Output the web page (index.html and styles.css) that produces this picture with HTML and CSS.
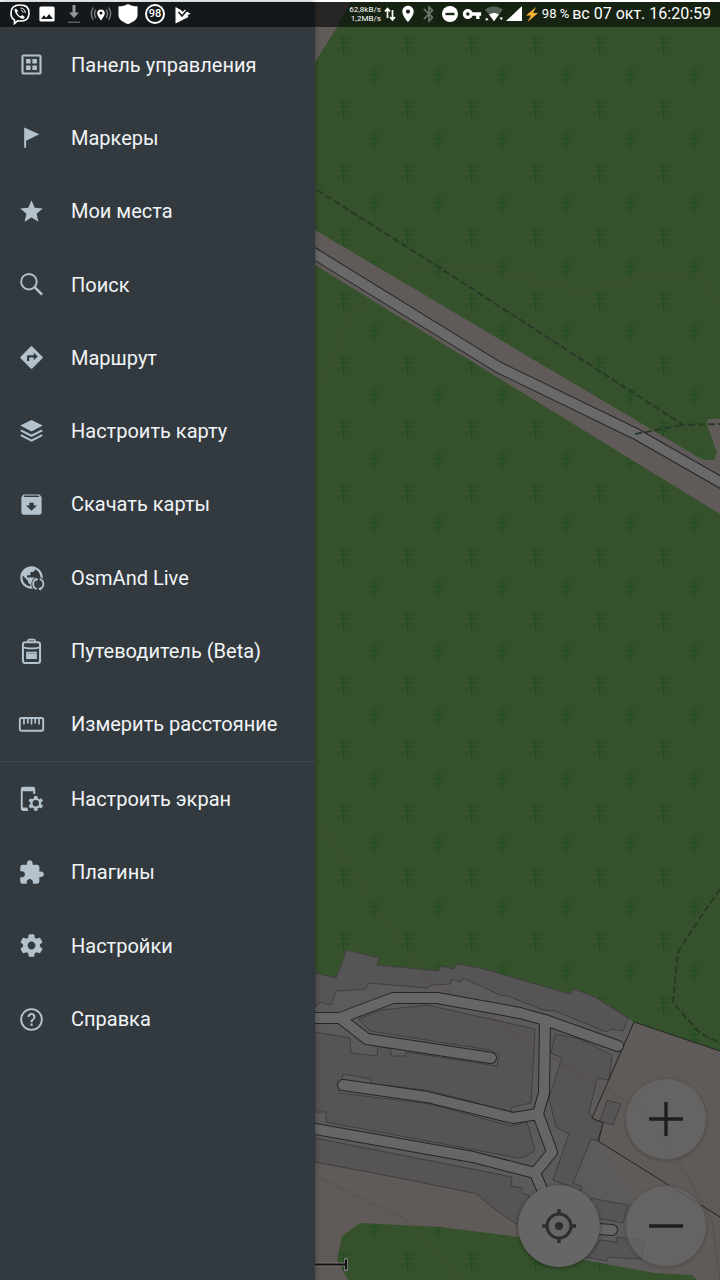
FILE: index.html
```html
<!DOCTYPE html>
<html lang="ru">
<head>
<meta charset="utf-8">
<meta name="viewport" content="width=device-width, initial-scale=1">
<title>OsmAnd</title>
<link rel="stylesheet" href="styles.css">
</head>
<body>
<div class="screen">
  <header class="status">
    <div class="status-left">
      <svg class="s-icon" viewBox="0 0 22 22"><path d="M11 2C4.500 2 2 4.500 2 10c0 3.500 1 5.800 3.500 7v3.500l3-2.700c8 .9 11.500-1.600 11.500-7.800C20 4.500 17.500 2 11 2z" fill="none" stroke="#fff" stroke-width="1.600"/><path d="M7 5.500l2 2.500-1 1.500c.8 2 1.800 3 3.700 3.800l1.500-1.200 2.500 1.900c-.3 1.600-1.400 2.200-2.700 1.700C9 14 6.500 11 5.500 7.500c0-1 .6-1.700 1.500-2z" fill="#fff"/><path d="M11.500 5c3 .2 4.700 2 4.800 5M12 7.300c1.300.2 2 1 2.100 2.300" fill="none" stroke="#fff" stroke-width="1"/></svg>
      <svg class="s-icon" viewBox="1 1 26 26"><path fill="#fff" d="M23 21V7c0-1.100-.9-2-2-2H7c-1.100 0-2 .9-2 2v14c0 1.100.9 2 2 2h14c1.100 0 2-.9 2-2zM10.500 15.500l2.500 3 3.500-4.500 4.500 6H7z"/></svg>
      <svg class="s-icon" viewBox="0 0 22 22"><path d="M9.500 2h3v7.500H16l-5 5.500-5-5.500h3.500z" fill="#96999a"/><path d="M5 18.500h12V20H5z" fill="#5a5e60"/></svg>
      <svg class="s-icon" viewBox="0 0 22 22"><path d="M11 6.500c-2.300 0-3.800 1.600-3.800 3.600C7.200 13 11 17.500 11 17.500s3.800-4.500 3.800-7.400c0-2-1.500-3.600-3.800-3.600zm0 5a1.500 1.500 0 1 1 0-3 1.500 1.500 0 0 1 0 3z" fill="#fff"/><g fill="none" stroke="#7c8183" stroke-width="1.400"><path d="M5.800 6.500c-1.500 2.500-1.500 6 0 8.500M16.200 6.500c1.500 2.500 1.500 6 0 8.500M3.300 4.500c-2.300 3.700-2.300 8.800 0 12.500M18.700 4.500c2.300 3.700 2.300 8.800 0 12.500"/></g></svg>
      <svg class="s-icon" viewBox="0 0 22 22"><path d="M11 1c2.500 1.500 5.500 2.300 9.500 2.300v9c0 5-5.500 7-9.500 9-4-2-9.500-4-9.500-9v-9C5.500 3.300 8.500 2.500 11 1z" fill="#fff"/></svg>
      <span class="badge">98</span>
      <svg class="s-icon" viewBox="0 0 22 22"><path d="M4.500 4L10 7l1.500 2L14 6.500l2 2.200 3.500 1.800-3 2 1 1.500-13 6.500z" fill="#fff"/><path d="M7.500 9l3.500 4 6.500-7.500" fill="none" stroke="#161a1c" stroke-width="1.600"/></svg>
    </div>
    <div class="status-right">
      <div class="speed"><span>62,8kB/s</span><span>1,2MB/s</span></div>
      <svg class="arrows" viewBox="0 0 12 18"><path d="M3.500 13V4M1 6.500L3.500 3.500 6 6.500M8.500 5v9M6 12l2.500 3 2.500-3" fill="none" stroke="#fff" stroke-width="1.700"/></svg>
      <svg class="r-icon" viewBox="3 1 18 22"><path fill="#fff" d="M12 2C8.130 2 5 5.130 5 9c0 5.250 7 13 7 13s7-7.750 7-13c0-3.870-3.130-7-7-7zm0 9.500c-1.380 0-2.500-1.120-2.500-2.500s1.120-2.500 2.500-2.500 2.500 1.120 2.500 2.500-1.120 2.500-2.500 2.500z"/></svg>
      <svg class="r-icon" viewBox="1 1 22 22"><path fill="#6d766d" d="M17.710 7.710L12 2h-1v7.590L6.410 5 5 6.410 10.590 12 5 17.590 6.410 19 11 14.410V22h1l5.710-5.710-4.300-4.290zM13 5.830l1.880 1.880L13 9.590zm1.880 10.460L13 18.170v-3.760z"/></svg>
      <svg class="r-icon" viewBox="0 0 18 18"><circle cx="9" cy="9" r="8" fill="#fff"/><path d="M4.500 7.800h9v2.400h-9z" fill="#1b2919"/></svg>
      <svg class="key" viewBox="0 4 24 16"><path fill="#fff" d="M12.650 10C11.830 7.670 9.610 6 7 6c-3.310 0-6 2.690-6 6s2.690 6 6 6c2.610 0 4.830-1.670 5.650-4H17v4h4v-4h2v-4zM7 14c-1.100 0-2-.9-2-2s.9-2 2-2 2 .9 2 2-.9 2-2 2z"/></svg>
      <svg class="r-icon" viewBox="0 0 20 18"><path d="M0 4c6-4.500 14-4.500 20 0L10 17z" fill="#566155"/><path d="M4.500 9.500c3.500-2.300 7.500-2.300 11 0L10 17z" fill="#fff"/><path d="M0 16l2-3 2 3zM16 13h4l-2 3z" fill="#fff"/></svg>
      <svg class="signal" viewBox="0 0 16 16"><path d="M16 0v15H0z" fill="#fff"/></svg>
      <svg class="bolt" viewBox="0 0 14 18"><path d="M11 2L1 10.500h5L2.500 17 13 8H8z" fill="#f6b431"/></svg>
      <span class="battery">98 %</span>
      <span class="clock">вс 07 окт. 16:20:59</span>
    </div>
  </header>

  <nav class="drawer">
    <ul class="menu menu-main">
      <li><a href="#dashboard"><svg class="icon" viewBox="0 0 24 24"><rect x="4" y="4" width="16" height="16" rx="1" fill="none" stroke="currentColor" stroke-width="1.900"/><path d="M7.200 7.200h4v4h-4zM12.800 7.200h4v4h-4zM7.200 12.800h4v4h-4zM12.800 12.800h4v4h-4z"/></svg>Панель управления</a></li>
      <li><a href="#markers"><svg class="icon" viewBox="0 0 24 24"><path d="M5.500 3L19 9 7.200 14.800V21H5.500z"/></svg>Маркеры</a></li>
      <li><a href="#places"><svg class="icon" viewBox="0 0 24 24"><path d="M12 17.270L18.180 21l-1.640-7.030L22 9.240l-7.190-.61L12 2 9.190 8.630 2 9.240l5.460 4.730L5.820 21z"/></svg>Мои места</a></li>
      <li><a href="#search"><svg class="icon" viewBox="0 0 24 24"><path d="M14.500 14.200l6.900 6.900" stroke="currentColor" stroke-width="2.200"/><circle cx="9.700" cy="9.500" r="6.900" fill="none" stroke="currentColor" stroke-width="1.700"/></svg>Поиск</a></li>
      <li><a href="#route"><svg class="icon" viewBox="0 0 24 24"><path d="M21.710 11.290l-9-9c-.39-.39-1.020-.39-1.410 0l-9 9c-.39.39-.39 1.020 0 1.410l9 9c.39.39 1.020.39 1.410 0l9-9c.39-.38.39-1.010 0-1.410zM14 14.500V12h-4v3H8v-4c0-.55.45-1 1-1h5V7.500l3.500 3.500z"/></svg>Маршрут</a></li>
      <li><a href="#map"><svg class="icon" viewBox="0 0 24 24"><path d="M12 1.800L22 6.700 12 12 2 6.700z"/><path d="M2.500 11l9.500 4.800 9.500-4.800M2.500 15.300l9.500 4.800 9.500-4.800" fill="none" stroke="currentColor" stroke-width="1.800"/></svg>Настроить карту</a></li>
      <li><a href="#download"><svg class="icon" viewBox="0 0 24 24"><path fill-rule="evenodd" d="M20.500 4.800L19.200 3H4.800L3.500 4.800C3.200 5.200 3 5.600 3 6v13c0 1.100.9 2 2 2h14c1.100 0 2-.9 2-2V6c0-.4-.2-.8-.5-1.200zM12 17.500l-5-4.700h3V10.500h4v2.300h3zM5 5.300L5.800 4h12.400l.8 1.300z"/></svg>Скачать карты</a></li>
      <li><a href="#live"><svg class="icon" viewBox="0 0 24 24"><path d="M12 2C6.480 2 2 6.480 2 12s4.480 10 10 10 10-4.480 10-10S17.520 2 12 2zm-1 17.930c-3.950-.49-7-3.850-7-7.930 0-.62.08-1.210.21-1.790L9 15v1c0 1.100.9 2 2 2zm6.900-2.540c-.26-.81-1-1.390-1.900-1.390h-1v-3c0-.55-.45-1-1-1H8v-2h2c.55 0 1-.45 1-1V7h2c1.100 0 2-.9 2-2v-.41c2.930 1.190 5 4.060 5 7.410 0 2.080-.8 3.970-2.100 5.390z"/><circle cx="18" cy="17.800" r="6.200" fill="#333a3f"/><path d="M16.700 22.200c-4.300-1-4.300-7.700 0-8.700M19.300 13.500c4.300 1 4.300 7.700 0 8.700" fill="none" stroke="currentColor" stroke-width="1.600"/><path d="M15.700 11.800l2.300 1.900-2.300 1.900zM20.300 20.200v3.800L18 22.100z"/></svg>OsmAnd Live</a></li>
      <li><a href="#guide"><svg class="icon" viewBox="0 0 24 24"><path d="M9 3.500V2.300C9 1 15 1 15 2.300v1.200" fill="none" stroke="currentColor" stroke-width="1.600"/><rect x="4.400" y="3.800" width="15.200" height="18.500" rx="2" fill="none" stroke="currentColor" stroke-width="1.800"/><path d="M5 8.200c2 1.400 12 1.400 14 0M8 13h8v5H8z" stroke="currentColor" stroke-width="1.500" fill="none"/><path d="M8 14h8v4.500H8z"/></svg>Путеводитель (Beta)</a></li>
      <li><a href="#measure"><svg class="icon" viewBox="0 0 24 24"><rect x="1.600" y="6.200" width="20.800" height="11.400" rx="1.500" fill="none" stroke="currentColor" stroke-width="1.700"/><path d="M5.300 7v5M8.700 7v4M12 7v5M15.300 7v4M18.700 7v5" stroke="currentColor" stroke-width="1.500"/></svg>Измерить расстояние</a></li>
    </ul>
    <ul class="menu menu-extra">
      <li><a href="#screen"><svg class="icon" viewBox="0 0 24 24"><path d="M4.500 1.500h8.800c1.100 0 2 .9 2 2V8h-1.800V5.500H4.200V20h4l1 3H4.500c-1.100 0-2-.9-2-2V3.500c0-1.100.9-2 2-2z"/><circle cx="15.800" cy="16.300" r="3.900" fill="none" stroke="currentColor" stroke-width="2"/><path d="M15.800 9.800V12M15.800 20.600v2.200M10.100 13l1.900 1.100M19.600 18.500l1.900 1.100M10.100 19.600l1.900-1.100M19.600 14.100l1.900-1.100" stroke="currentColor" stroke-width="3"/></svg>Настроить экран</a></li>
      <li><a href="#plugins"><svg class="icon" viewBox="0 0 24 24"><path d="M20.500 11H19V7c0-1.100-.9-2-2-2h-4V3.500C13 2.120 11.880 1 10.500 1S8 2.120 8 3.500V5H4c-1.100 0-1.990.9-1.990 2v3.800H3.500c1.490 0 2.700 1.210 2.700 2.700s-1.210 2.700-2.700 2.700H2V20c0 1.100.9 2 2 2h3.800v-1.500c0-1.490 1.210-2.700 2.700-2.700s2.700 1.210 2.700 2.700V22H17c1.100 0 2-.9 2-2v-4h1.500c1.380 0 2.500-1.120 2.500-2.500S21.880 11 20.500 11z"/></svg>Плагины</a></li>
      <li><a href="#settings"><svg class="icon" viewBox="0 0 24 24"><path d="M19.430 12.980c.04-.32.07-.64.07-.98s-.03-.66-.07-.98l2.110-1.650c.19-.15.24-.42.12-.64l-2-3.460c-.12-.22-.39-.3-.61-.22l-2.490 1c-.52-.4-1.080-.73-1.690-.98l-.38-2.650C14.460 2.180 14.250 2 14 2h-4c-.25 0-.46.18-.49.42l-.38 2.650c-.61.25-1.170.59-1.690.98l-2.490-1c-.23-.09-.49 0-.61.22l-2 3.460c-.13.22-.07.49.12.64l2.110 1.650c-.04.32-.07.65-.07.98s.03.66.07.98l-2.110 1.650c-.19.15-.24.42-.12.64l2 3.460c.12.22.39.3.61.22l2.490-1c.52.4 1.080.73 1.690.98l.38 2.650c.03.24.24.42.49.42h4c.25 0 .46-.18.49-.42l.38-2.650c.61-.25 1.170-.59 1.690-.98l2.490 1c.23.09.49 0 .61-.22l2-3.460c.12-.22.07-.49-.12-.64zM12 15.500c-1.930 0-3.500-1.570-3.500-3.500s1.570-3.500 3.500-3.500 3.500 1.570 3.500 3.500-1.570 3.500-3.500 3.500z"/></svg>Настройки</a></li>
      <li><a href="#help"><svg class="icon" viewBox="0 0 24 24"><circle cx="12" cy="12" r="9.200" fill="none" stroke="currentColor" stroke-width="1.700"/><path d="M11.100 17.500h1.900v-1.900h-1.900zM12 6.200c-2 0-3.500 1.500-3.500 3.500h1.800c0-1 .7-1.800 1.700-1.800s1.700.8 1.700 1.800c0 1.700-2.600 1.800-2.600 4.700H13c0-2.300 2.500-2.500 2.500-4.700 0-2-1.500-3.500-3.500-3.500z"/></svg>Справка</a></li>
    </ul>
  </nav>

  <main class="map">
    <svg class="map-canvas" viewBox="315 0 405 1280" preserveAspectRatio="xMinYMin slice">
      <defs>
        <pattern id="trees" x="327" y="29" width="64" height="64" patternUnits="userSpaceOnUse">
          <g fill="none" stroke="#234d21" stroke-width="1.200">
            <path d="M16.500 8v16h4M11 11l5.500-3 5 3M11 15l5.500-2 5 2M11 20l5.500-3 5 3"/>
            <path d="M47.500 40v17M42 43l5.500-3 5 3M42 47l5.500-2 5 2M42 52l5.500-3 5 3"/>
          </g>
        </pattern>
      </defs>
      <path class="forest" d="M315 0H720V1280H315z"/>
      <path fill="url(#trees)" d="M315 0H720V1280H315z"/>
      <path class="ground" d="M315 0H352L337 27 315 62zM315 230L703 460H714L717 453 707 424 708 419H720V514L315 265z"/>
      <path class="ground" d="M634 1022L720 1051V1280H697L692 1275 655 1273 585 1260 520 1237 440 1227 360 1223 342 1236 337 1260 348 1280H315V1140L570 1130z"/>
      <path class="homes" d="M315 973L336 978 347 950 379 958 377 965 438 971 441 966 454 969 456 964 480 968 570 994 574 989 595 997 634 1022 592 1118 603 1123 598 1141 608 1153 635 1200 655 1240V1273L585 1260 520 1237 518 1225 497 1211 477 1194 410 1180 315 1162z"/>
      <g class="parcel">
        <path d="M315 973L336 978 347 950 379 958 377 965 438 971 441 966 454 969 456 964 480 968 570 994 574 989 595 997 628 1018 623 1031 612 1029 606 1032 555 1011 543 1010 508 996 500 995 463 978 460 982 452 979 450 984 431 985 427 988 368 983 366 989 336 991 331 1005 319 1002 315 1008z"/>
        <path d="M315 1032L350 1038 351 1053 377 1056 378 1046 391 1049V1056H405L406 1052 497 1066 499 1055 490 1050 370 1031 358 1019 382 1010 427 1005 535 1029 531 1103 512 1107 511 1112 427 1090 371 1084V1079L343 1074 339 1093 430 1104 511 1126 527 1122 535 1150 525 1157 518 1158 326 1122V1112H315z"/>
        <path d="M315 1138L512 1177 511 1186 522 1188V1193L528 1195 540 1225H518L497 1211 477 1194 410 1180 315 1162z"/>
        <path d="M555 1034L580 1039 612 1055 609 1080 597 1078 589 1113 592 1118 603 1123 599 1141 591 1139 573 1183 582 1186 581 1191 553 1180 569 1134 556 1127 549 1098 562 1058 551 1053z"/>
        <path d="M590 1198L628 1205 623 1223 597 1218zM600 1240L617 1242V1237L644 1241 642 1259 608 1257 607 1261 585 1257zM607 1100L621 1104 613 1125 600 1121z"/>
      </g>
      <path class="fence" d="M720 1051L634 1022 592 1118 603 1123 598 1141 720 1217"/>
      <path class="contour" d="M317 393L335 353 347 317 365 303M400 278L410 272 470 264 523 278 587 293 643 275 700 276 715 300"/>
      <path class="contour" d="M315 818L393 930 424 977 500 1023 560 1063 647 1113 690 1180 712 1220 720 1280M315 1175L410 1222 460 1280"/>
      <g class="road-edge">
        <path d="M305 248L315 254 498 367 636 434 720 482 730 488"/>
        <path d="M305 1018H340L393 998H437L520 1013 545 1020 618 1046M340 1018L367 1039 491 1058M343 1085L427 1097 513 1118 538 1114M545 1020L544 1093 538 1114 552 1152 535 1173 558 1226 612 1230M305 1128L315 1129 473 1157 535 1173"/>
      </g>
      <g class="road">
        <path class="highway" d="M305 248L315 254 498 367 636 434 720 482 730 488"/>
        <path d="M305 1018H340L393 998H437L520 1013 545 1020 618 1046M340 1018L367 1039 491 1058M343 1085L427 1097 513 1118 538 1114M545 1020L544 1093 538 1114 552 1152 535 1173 558 1226 612 1230M305 1128L315 1129 473 1157 535 1173"/>
      </g>
      <path class="trail" d="M317 190L440 268 683 425 720 424M635 434L683 425M720 889L692 930 678 952 673 1003 700 1033 718 1042"/>
      <path class="scale-halo" d="M315 1264.500H346M346 1258V1271"/>
      <path class="scale" d="M315 1264.500H346M346 1259.500V1269.500"/>
    </svg>
    <div class="controls">
      <button class="round zoom-in" type="button" aria-label="Приблизить"><svg viewBox="0 0 40 40"><path d="M3 20H37M20 3V37" stroke="#1e1e1e" stroke-width="3.400"/></svg></button>
      <button class="round locate" type="button" aria-label="Моё местоположение"><svg viewBox="0 0 40 40"><g fill="none" stroke="#2e2e2e"><circle cx="20" cy="20" r="12" stroke-width="3"/><path d="M20 3V8.500M20 31.500V37M3 20H8.500M31.500 20H37" stroke-width="3.400"/></g><circle cx="20" cy="20" r="4" fill="#2e2e2e"/></svg></button>
      <button class="round zoom-out" type="button" aria-label="Отдалить"><svg viewBox="0 0 40 40"><path d="M3 20H37" stroke="#1e1e1e" stroke-width="3.400"/></svg></button>
    </div>
  </main>
</div>
</body>
</html>
```
FILE: styles.css
```css
* {
  box-sizing: border-box;
}

body {
  margin: 0;
  font-family: Roboto, "Noto Sans", sans-serif;
  color: #f1f4f6;
  background: #333a3f;
}

.screen {
  position: relative;
  display: grid;
  grid-template-columns: 7fr 9fr;
  min-height: 100vh;
  border-top: 2px solid #fff;
}

.status {
  position: absolute;
  inset: 0 0 auto 0;
  z-index: 2;
  display: flex;
  align-items: center;
  justify-content: space-between;
  height: 25px;
  padding: 0 9px 2px;
  background: rgba(0, 0, 0, 0.58);
  color: #fff;
}

.status-left,
.status-right {
  display: flex;
  align-items: center;
}

.status-left {
  gap: 5px;
}

.status-right {
  gap: 3px;
}

.s-icon {
  width: 22px;
  height: 22px;
}

.badge {
  width: 20px;
  height: 20px;
  margin: 0 1px;
  border: 2px solid #fff;
  border-radius: 50%;
  font-size: 11px;
  font-weight: 500;
  line-height: 16px;
  text-align: center;
}

.speed {
  display: flex;
  flex-direction: column;
  align-items: flex-end;
  font-size: 8px;
  line-height: 9px;
}

.arrows {
  width: 12px;
  height: 18px;
}

.r-icon {
  width: 18px;
  height: 18px;
}

.key {
  width: 20px;
  height: 14px;
}

.signal {
  width: 16px;
  height: 16px;
}

.bolt {
  width: 14px;
  height: 18px;
}

.battery {
  font-size: 13px;
}

.clock {
  font-size: 16px;
}

.drawer {
  z-index: 1;
  padding-top: 26px;
  background: #333a3f;
  box-shadow: 0 0 6px rgba(0, 0, 0, 0.35);
}

.menu {
  display: grid;
  grid-auto-rows: 1fr;
  margin: 0;
  padding: 0;
  list-style: none;
}

.menu-main {
  min-height: 733px;
}

.menu-extra {
  min-height: 295px;
  border-top: 1px solid #41484d;
}

.menu a {
  display: flex;
  align-items: center;
  gap: 26px;
  height: 100%;
  padding-left: 18px;
  color: inherit;
  font-size: 20px;
  line-height: 24px;
  text-decoration: none;
  white-space: nowrap;
}

.icon {
  flex: none;
  width: 27px;
  height: 27px;
  color: #b3c2cd;
  fill: currentColor;
}

.map {
  position: relative;
  overflow: hidden;
}

.map-canvas {
  position: absolute;
  inset: -2px 0 0 0;
  width: 100%;
  height: calc(100% + 2px);
}

.forest {
  fill: #36522d;
}

.ground {
  fill: #605b59;
}

.homes {
  fill: #5d5a5b;
}

.parcel {
  fill: #575456;
  stroke: #403e3f;
  stroke-width: 1;
}

.fence {
  fill: none;
  stroke: #242323;
  stroke-width: 1;
}

.contour {
  fill: none;
  stroke: #4e4435;
  stroke-width: 1;
  opacity: 0.45;
}

.road-edge,
.road {
  fill: none;
  stroke-linecap: round;
  stroke-linejoin: round;
}

.road-edge {
  stroke: #252525;
  stroke-width: 12;
}

.road {
  stroke: #666;
  stroke-width: 10;
}

.road .highway {
  stroke: #6a696a;
}

.trail {
  fill: none;
  stroke: #263a25;
  stroke-width: 2;
  stroke-dasharray: 7 3;
}

.scale-halo {
  fill: none;
  stroke: #777;
  stroke-width: 4;
}

.scale {
  fill: none;
  stroke: #111;
  stroke-width: 2;
}

.controls {
  position: absolute;
  right: 13px;
  bottom: 13px;
  display: grid;
  grid-template-areas: ". in" "locate out";
  gap: 25px;
}

.zoom-in {
  grid-area: in;
}

.locate {
  grid-area: locate;
}

.zoom-out {
  grid-area: out;
}

.round {
  display: grid;
  place-items: center;
  width: 82px;
  height: 82px;
  padding: 0;
  border: 1px solid #555252;
  border-radius: 50%;
  background: rgba(104, 104, 104, 0.7);
  box-shadow: 0 1px 3px rgba(0, 0, 0, 0.2);
}

.round.locate {
  border-color: #666;
  background: #666;
  box-shadow: 0 1px 4px rgba(0, 0, 0, 0.4);
}

.round svg {
  width: 40px;
  height: 40px;
}
```
